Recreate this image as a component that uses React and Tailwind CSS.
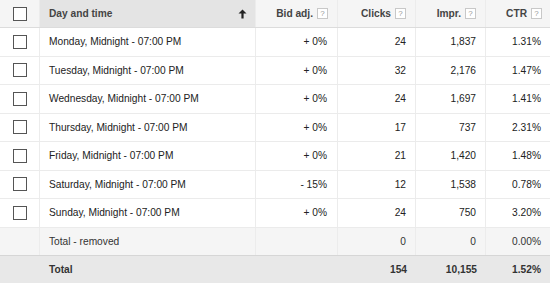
const rows = [
    ["Monday", "+ 0%", "24", "1,837", "1.31%"],
    ["Tuesday", "+ 0%", "32", "2,176", "1.47%"],
    ["Wednesday", "+ 0%", "24", "1,697", "1.41%"],
    ["Thursday", "+ 0%", "17", "737", "2.31%"],
    ["Friday", "+ 0%", "21", "1,420", "1.48%"],
    ["Saturday", "- 15%", "12", "1,538", "0.78%"],
    ["Sunday", "+ 0%", "24", "750", "3.20%"],
]

function Help() {
    return (
        <span className="ml-[4px] inline-flex h-[11px] w-[11px] items-center justify-center border border-[#c8c8c8] bg-white text-[8px] font-normal leading-none text-[#999]">
            ?
        </span>
    )
}

function Box() {
    return <span className="block h-[14px] w-[14px] border border-[#555] bg-white" />
}

const cell = "flex h-full items-center border-r border-[#ececec]"

export default function App() {
    return (
        <div
            className="w-[550px] h-[283px] overflow-hidden bg-white text-[10.2px] text-[#222]"
            style={{ fontFamily: '"Liberation Sans", Arial, sans-serif' }}
        >
            <div className="flex h-[28px] border-b border-[#dcdcdc] bg-[#f5f5f5] font-bold text-[#444]">
                <div className={`${cell} w-[40px] justify-center`}>
                    <Box />
                </div>
                <div className={`${cell} w-[216px] justify-between bg-[#e4e4e4] pl-[9px] pr-[8px]`}>
                    <span>Day and time</span>
                    <svg width="9" height="10" viewBox="0 0 9 10">
                        <path d="M4.5 0.5 L8.5 4.5 L5.6 4.5 L5.6 9.5 L3.4 9.5 L3.4 4.5 L0.5 4.5 Z" fill="#222" />
                    </svg>
                </div>
                <div className={`${cell} w-[82px] justify-end pr-[9px]`}>
                    Bid adj.<Help />
                </div>
                <div className={`${cell} w-[78px] justify-end pr-[9px]`}>
                    Clicks<Help />
                </div>
                <div className={`${cell} w-[70px] justify-end pr-[9px]`}>
                    Impr.<Help />
                </div>
                <div className="flex h-full w-[64px] items-center justify-end pr-[8px]">
                    CTR<Help />
                </div>
            </div>

            {rows.map(([day, bid, clicks, impr, ctr]) => (
                <div key={day} className="flex h-[28.5px] border-b border-[#ebebeb]">
                    <div className={`${cell} w-[40px] justify-center`}>
                        <Box />
                    </div>
                    <div className={`${cell} w-[216px] pl-[9px]`}>{day}, Midnight - 07:00 PM</div>
                    <div className={`${cell} w-[82px] justify-end pr-[10px]`}>{bid}</div>
                    <div className={`${cell} w-[78px] justify-end pr-[9px]`}>{clicks}</div>
                    <div className={`${cell} w-[70px] justify-end pr-[9px]`}>{impr}</div>
                    <div className="flex h-full w-[64px] items-center justify-end pr-[9px]">{ctr}</div>
                </div>
            ))}

            <div className="flex h-[28.5px] border-b border-[#d6d6d6] bg-[#f5f5f5] text-[#333]">
                <div className={`${cell} w-[40px]`} />
                <div className={`${cell} w-[216px] pl-[9px]`}>Total - removed</div>
                <div className={`${cell} w-[82px]`} />
                <div className={`${cell} w-[78px] justify-end pr-[9px]`}>0</div>
                <div className={`${cell} w-[70px] justify-end pr-[9px]`}>0</div>
                <div className="flex h-full w-[64px] items-center justify-end pr-[9px]">0.00%</div>
            </div>

            <div className="flex h-[28px] bg-[#e8e8e8] font-bold text-[#333]">
                <div className="w-[40px]" />
                <div className="flex w-[216px] items-center pl-[9px]">Total</div>
                <div className="w-[82px]" />
                <div className="flex w-[78px] items-center justify-end pr-[9px]">154</div>
                <div className="flex w-[70px] items-center justify-end pr-[9px]">10,155</div>
                <div className="flex w-[64px] items-center justify-end pr-[9px]">1.52%</div>
            </div>
        </div>
    )
}
